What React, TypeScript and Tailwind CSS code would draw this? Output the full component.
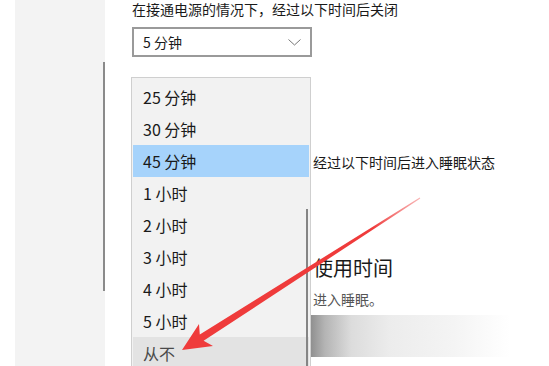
import React from 'react';

const items = ['25 分钟', '30 分钟', '45 分钟', '1 小时', '2 小时', '3 小时', '4 小时', '5 小时', '从不'];

export default function App() {
  return (
    <div
      className="relative w-[549px] h-[366px] overflow-hidden bg-white flex text-[#1a1a1a]"
      style={{ fontFamily: '"Noto Sans CJK SC", "Noto Sans", sans-serif' }}
    >
      {/* left nav pane */}
      <div className="ml-[15px] w-[90px] h-full bg-[#f3f3f3] flex justify-end">
        <div className="mt-[62px] w-[2px] h-[229px] bg-[#8a8a8a]" />
      </div>

      {/* settings column */}
      <div className="ml-[27px] w-[378px] flex flex-col text-[14px]">
        <p className="leading-[18px]">在接通电源的情况下，经过以下时间后关闭</p>
        <div className="mt-[9px] w-[180px] h-[30px] border-2 border-[#9a9a9a] flex items-center justify-between pl-[9px] pr-[9px]">
          <span className="leading-[18px]">5 分钟</span>
          <svg width="13" height="7" viewBox="0 0 13 7">
            <path d="M0.5 0.5 L6.5 6 L12.5 0.5" fill="none" stroke="#777" strokeWidth="1" />
          </svg>
        </div>

        {/* the part left of x=311 is covered by the open list */}
        <div className="pl-[181px] flex flex-col">
          <p className="mt-[96px] leading-[18px]">经过以下时间后进入睡眠状态</p>
          <h2 className="mt-[83px] text-[20px] leading-[28px]">使用时间</h2>
          <p className="mt-[7px] leading-[20px] text-[#555]">进入睡眠。</p>
        </div>
        <div className="mt-[6px] h-[42px] w-full bg-[linear-gradient(90deg,#8a8a8a_0%,#8c8c8c_47%,#b4b4b4_51%,#dcdcdc_58%,#ececec_68%,#f4f4f4_85%,#ffffff_100%)]" />
      </div>

      {/* open dropdown list */}
      <div className="absolute left-[131px] top-[77px] w-[180px] h-[300px] border border-[#cfcfcf] bg-[#f2f2f2] pt-[3px] px-[1px]">
        {items.map((it) => (
          <div
            key={it}
            className={
              'h-[32px] flex items-center pl-[10px] leading-[18px] ' +
              (it === '45 分钟' ? 'bg-[#a6d3fb]' : it === '从不' ? 'bg-[#e3e3e3] text-[#4a4a4a]' : '')
            }
          >
            {it}
          </div>
        ))}
        <div className="absolute right-[2px] top-[131px] w-[2px] h-[170px] bg-[#858585]" />
      </div>

      {/* red annotation arrow */}
      <svg className="absolute left-0 top-0" width="549" height="366" viewBox="0 0 549 366">
        <defs>
          <linearGradient id="arrowFade" x1="420" y1="198" x2="182" y2="350" gradientUnits="userSpaceOnUse">
            <stop offset="0" stopColor="#f26a6a" stopOpacity="0.5" />
            <stop offset="0.2" stopColor="#ef3b3b" />
            <stop offset="1" stopColor="#ef3b3b" />
          </linearGradient>
        </defs>
        <polygon
          points="182,350 213,346 203.6,340.8 420.3,198.6 419.7,197.4 199.8,334.6 199,324"
          fill="url(#arrowFade)"
        />
      </svg>
    </div>
  );
}
